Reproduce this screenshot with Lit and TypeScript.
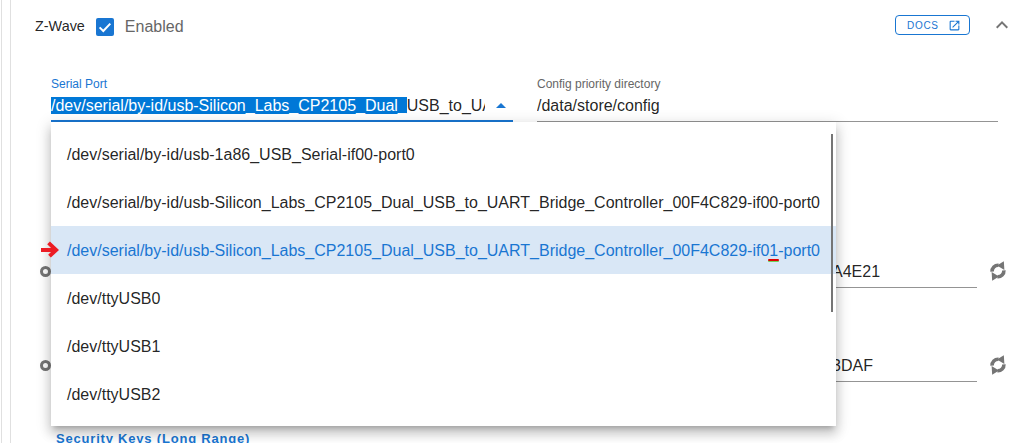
import { LitElement, html, css } from 'lit';
import { customElement, state } from 'lit/decorators.js';

const PORTS = [
  '/dev/serial/by-id/usb-1a86_USB_Serial-if00-port0',
  '/dev/serial/by-id/usb-Silicon_Labs_CP2105_Dual_USB_to_UART_Bridge_Controller_00F4C829-if00-port0',
  '/dev/serial/by-id/usb-Silicon_Labs_CP2105_Dual_USB_to_UART_Bridge_Controller_00F4C829-if01-port0',
  '/dev/ttyUSB0',
  '/dev/ttyUSB1',
  '/dev/ttyUSB2',
];

const KEYS = ['A4E21', '3DAF'];

@customElement('app-root')
export class AppRoot extends LitElement {
  @state() private _selected = 2;

  private _renderKeyRow(value: string) {
    return html`
      <div class="key-row">
        <span class="radio"></span>
        <div class="key-field"><span>${value}</span></div>
        <svg class="refresh" viewBox="0 0 16 20">
          <path class="arc" d="M8.5 4.2A6 6 0 0 0 2.1 10.6"></path>
          <path class="arc" d="M7.5 15.8A6 6 0 0 0 13.9 9.4"></path>
          <path d="M13.8 0.2L14.4 9L7 4.4z"></path>
          <path d="M2.2 19.8L1.6 11L9 15.6z"></path>
        </svg>
      </div>
    `;
  }

  protected render() {
    return html`
      <div class="page">
        <div class="panel">
          <div class="header">
            <span class="title">Z-Wave</span>
            <span class="checkbox">
              <svg viewBox="0 0 18 18"><path d="M3.6 9.4l3.7 3.6 7-7.4"></path></svg>
            </span>
            <span class="enabled">Enabled</span>
            <span class="spacer"></span>
            <a class="docs">
              DOCS
              <svg viewBox="0 0 24 24">
                <path
                  d="M14 3v2h3.6l-9.8 9.8 1.4 1.4L19 6.4V10h2V3M19 19H5V5h7V3H5a2 2 0 0 0-2 2v14a2 2 0 0 0 2 2h14a2 2 0 0 0 2-2v-7h-2z"
                ></path>
              </svg>
            </a>
            <svg class="chevron" viewBox="0 0 24 24">
              <path d="M7.4 15.4L12 10.8l4.6 4.6L18 14l-6-6-6 6z"></path>
            </svg>
          </div>

          <div class="fields">
            <div class="field active">
              <label>Serial Port</label>
              <div class="control">
                <div class="value"><span class="selection">/dev/serial/by-id/usb-Silicon_Labs_CP2105_Dual_</span>USB_to_UART_Bridge</div>
                <span class="caret"></span>
              </div>
            </div>
            <div class="field">
              <label>Config priority directory</label>
              <div class="control"><div class="value">/data/store/config</div></div>
            </div>
          </div>

          <div class="keys">${KEYS.map((k) => this._renderKeyRow(k))}</div>
          <div class="section-title">Security Keys (Long Range)</div>
        </div>

        <div class="menu">
          ${PORTS.map(
            (port, i) => html`<div class="item ${i === this._selected ? 'selected' : ''}">${port}</div>`
          )}
          <span class="scrollbar"></span>
        </div>

        <svg class="arrow" viewBox="0 0 20 18">
          <path d="M1 9.5h15M9 2l8 7.5-7 6.5"></path>
        </svg>
        <span class="mark"></span>
      </div>
    `;
  }

  static styles = css`
    :host {
      display: block;
      font-family: 'Liberation Sans', Arial, sans-serif;
      color: rgba(0, 0, 0, 0.87);
    }

    .page {
      position: relative;
      height: 443px;
      overflow: hidden;
      background: #fff;
      padding-left: 1px;
      box-sizing: border-box;
    }

    .page::before {
      content: '';
      position: absolute;
      left: 1px;
      top: 0;
      bottom: 0;
      width: 1px;
      background: #e0e0e0;
    }

    .panel {
      margin-left: 9px;
      border-left: 1px solid #e0e0e0;
      height: 100%;
      box-sizing: border-box;
      padding: 16px 0 0 24px;
    }

    .header {
      display: flex;
      align-items: center;
      height: 22px;
      padding-right: 16px;
    }

    .title {
      font-size: 14.4px;
      margin-top: -2px;
    }

    .checkbox {
      width: 18px;
      height: 18px;
      margin-left: 11px;
      border-radius: 2px;
      background: #1976d2;
      display: inline-flex;
    }

    .checkbox svg {
      width: 18px;
      height: 18px;
      fill: none;
      stroke: #fff;
      stroke-width: 2;
    }

    .enabled {
      margin-left: 11px;
      font-size: 16px;
      color: #666;
    }

    .spacer {
      flex: 1;
    }

    .docs {
      display: flex;
      align-items: center;
      justify-content: space-between;
      width: 54px;
      height: 18px;
      margin-top: -4px;
      padding: 0 8px 0 11px;
      border: 1px solid #1976d2;
      border-radius: 4px;
      color: #1976d2;
      font-size: 10px;
      letter-spacing: 0.7px;
    }

    .docs svg {
      width: 13px;
      height: 13px;
      fill: #1976d2;
    }

    .chevron {
      width: 24px;
      height: 24px;
      margin: -4px 0 0 20px;
      fill: #757575;
    }

    .fields {
      display: grid;
      grid-template-columns: 462px 461px;
      column-gap: 24px;
      margin: 39px 0 0 16px;
    }

    .field label {
      display: block;
      font-size: 12px;
      line-height: 14px;
      color: #666;
    }

    .field.active label {
      color: #1976d2;
    }

    .control {
      display: flex;
      align-items: center;
      height: 31px;
      box-sizing: border-box;
      border-bottom: 1px solid #949494;
    }

    .field.active .control {
      border-bottom: 2px solid #1976d2;
    }

    .value {
      flex: 1;
      min-width: 0;
      font-size: 16px;
      line-height: 19px;
      white-space: nowrap;
      overflow: hidden;
      margin-top: -1px;
    }

    .selection {
      background: #0078d7;
      color: #fff;
    }

    .caret {
      width: 0;
      height: 0;
      margin: -1px 7px 0 11px;
      border-left: 5px solid transparent;
      border-right: 5px solid transparent;
      border-bottom: 5px solid #1976d2;
    }

    .keys {
      display: flex;
      flex-direction: column;
      gap: 65px;
      margin-top: 137px;
    }

    .key-row {
      display: flex;
      align-items: center;
      height: 29px;
    }

    .radio {
      width: 5px;
      height: 5px;
      margin: -4px 0 0 5px;
      border: 3px solid #757575;
      border-radius: 50%;
      flex: none;
    }

    .key-field {
      width: 926px;
      height: 29px;
      box-sizing: border-box;
      border-bottom: 1px solid #949494;
      padding-left: 781px;
      font-size: 16px;
      line-height: 26px;
      flex: none;
    }

    .refresh {
      width: 16px;
      height: 20px;
      margin: -6px 0 0 13px;
      fill: #757575;
    }

    .refresh .arc {
      fill: none;
      stroke: #757575;
      stroke-width: 3.6;
    }

    .section-title {
      margin: 50px 0 0 21px;
      font-size: 13px;
      font-weight: 700;
      line-height: 14px;
      letter-spacing: 0.8px;
      color: #1976d2;
    }

    .menu {
      position: absolute;
      left: 51px;
      top: 122px;
      width: 785px;
      height: 304px;
      box-sizing: border-box;
      padding: 8px 0;
      background: #fff;
      box-shadow: 0 5px 5px -3px rgba(0, 0, 0, 0.2), 0 8px 10px 1px rgba(0, 0, 0, 0.14),
        0 3px 14px 2px rgba(0, 0, 0, 0.12);
    }

    .item {
      height: 48px;
      line-height: 50px;
      padding-left: 16px;
      font-size: 16px;
      white-space: nowrap;
    }

    .item.selected {
      background: #d9e7f6;
      color: #1976d2;
    }

    .scrollbar {
      position: absolute;
      right: 3px;
      top: 12px;
      width: 2px;
      height: 178px;
      background: #757575;
    }

    .arrow {
      position: absolute;
      left: 40px;
      top: 241px;
      width: 19px;
      height: 17px;
      fill: none;
      stroke: #ec1c24;
      stroke-width: 4.2;
    }

    .mark {
      position: absolute;
      left: 768px;
      top: 259px;
      width: 11px;
      height: 2px;
      border-radius: 1px;
      background: #e00000;
      box-shadow: 0 1px 0 #6fd35b;
    }
  `;
}
